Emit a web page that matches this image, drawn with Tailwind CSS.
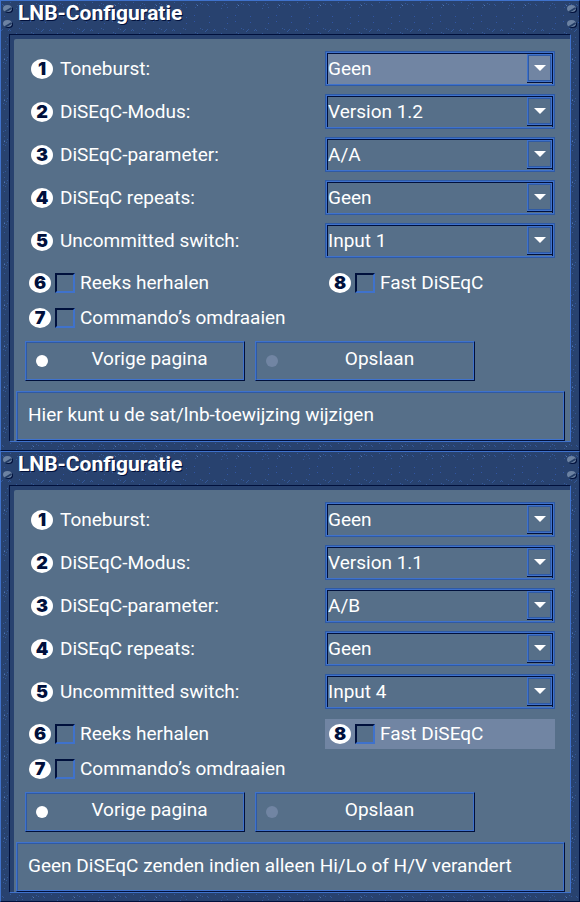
<!DOCTYPE html>
<html lang="nl">
<head>
  <meta charset="UTF-8" />
  <meta name="viewport" content="width=device-width, initial-scale=1.0" />
  <title>LNB-Configuratie</title>
  <script src="https://cdn.jsdelivr.net/npm/@tailwindcss/browser@4"></script>
</head>
<body class="bg-[#28426f] text-white font-[Roboto,sans-serif] text-[19px] leading-6">
  <!-- speckle textures shared by both windows -->
  <svg class="absolute w-0 h-0" aria-hidden="true">
    <defs>
      <pattern id="speckle-h" x="23" width="41" height="34" patternUnits="userSpaceOnUse">
        <path stroke="#33589a" d="M8 3.5h1M7 6.5h1M12 2.5h1M14 3.5h1M19 3.5h1M20 4.5h1M27 1.5h1M33 7.5h1M34 4.5h1M36 2.5h1M38 3.5h1M39 6.5h1M12 27.5h1M14 28.5h1M7 31.5h1M9 32.5h1M17 30.5h1M19 28.5h1M18 29.5h1M25 29.5h1M26 28.5h1M27 29.5h1M33 32.5h1M36 27.5h1M38 28.5h1" />
        <path stroke="#3055a4" d="M6 14.5h1M6 20.5h1M21 15.5h1M21 21.5h1M39 16.5h1M39 22.5h1" />
        <path stroke="#5378b0" d="M9 4.5h1" />
      </pattern>
      <pattern id="speckle-v" y="39" width="8" height="41" patternUnits="userSpaceOnUse">
        <path stroke="#33589a" d="M4 1.5h1M6 4.5h1M2 9.5h1M4 8.5h1M3 14.5h1M6 17.5h1M3 18.5h1M5 20.5h1M2 22.5h1M4 23.5h1M3 28.5h1M6 38.5h1" />
        <path stroke="#5378b0" d="M3 19.5h1" />
      </pattern>
      <symbol id="screw" viewBox="0 0 10 8">
        <ellipse cx="5.5" cy="4.5" rx="4.5" ry="3.5" fill="#00103c" />
        <ellipse cx="4.5" cy="3.5" rx="4.5" ry="3.5" fill="#6c82a2" />
        <path d="M2 7 8.5 3" stroke="#243d66" stroke-width="2" />
      </symbol>
    </defs>
  </svg>

  <main id="screens"></main>

  <script>
    const screens = [
      {
        values: ['Geen', 'Version 1.2', 'A/A', 'Geen', 'Input 1'],
        focus: 0,
        help: 'Hier kunt u de sat/lnb-toewijzing wijzigen',
      },
      {
        values: ['Geen', 'Version 1.1', 'A/B', 'Geen', 'Input 4'],
        focus: 'fast',
        help: 'Geen DiSEqC zenden indien alleen Hi/Lo of H/V verandert',
      },
    ];
    const labels = ['Toneburst:', 'DiSEqC-Modus:', 'DiSEqC-parameter:', 'DiSEqC repeats:', 'Uncommitted switch:'];

    function badge(n) {
      return `<span class="flex items-center justify-center shrink-0 w-[22px] h-5 rounded-[50%] bg-white text-[#00103c] font-[Inter,sans-serif] font-black text-lg leading-5">${n}</span>`;
    }

    function row(s, w, label, i) {
      const bg = s.focus === i ? 'bg-[#7185a3]' : 'bg-[#566f89]';
      return `
        <div class="grid grid-cols-[1fr_230px] items-center">
          <label for="field-${w}-${i}" class="flex items-center gap-[7px] pl-1.5">${badge(i + 1)}${label}</label>
          <div class="relative border border-[#2f5aa4]">
            <div class="border border-[#3f72cc]">
              <select id="field-${w}-${i}" class="block w-full h-[31px] appearance-none outline-none border-t border-l border-r border-[#00103c] ${bg}">
                <option>${s.values[i]}</option>
              </select>
            </div>
            <span class="absolute right-px inset-y-0.5 w-[26px] border-r border-b border-[#00103c] pointer-events-none">
              <span class="flex h-full border border-[#3f72cc]">
                <span class="flex flex-1 items-center justify-center border border-[#2f5aa4]">
                  <svg width="12" height="6" viewBox="0 0 12 6" fill="#fff"><path d="M0 0h12L6 6z" /></svg>
                </span>
              </span>
            </span>
          </div>
        </div>`;
    }

    function check(n, text, extra) {
      return `
        <label class="flex items-center h-[30px] pl-1 ${extra}">
          ${badge(n)}
          <input type="checkbox" class="appearance-none w-5 h-5 ml-1 mr-[5px] bg-[#566f89] border-2 border-t-[#00103c] border-l-[#00103c] border-r-[#3f72cc] border-b-[#3f72cc]" />
          ${text}
        </label>`;
    }

    function button(text, dot) {
      return `
        <button type="button" class="flex items-center w-[220px] h-10 border border-t-[#3f72cc] border-l-[#3f72cc] border-r-[#00103c] border-b-[#00103c]">
          <span class="flex flex-1 items-center h-full border border-t-[#2f5aa4] border-l-[#2f5aa4] border-r-[#3f72cc] border-b-[#3f72cc] pl-[9px]">
            <span class="w-3 h-3 rounded-full ${dot}"></span>
            <span class="flex-1 pl-2 pb-1">${text}</span>
          </span>
        </button>`;
    }

    function screws(side) {
      return `
        <svg class="absolute ${side} top-1 w-2.5 h-2"><use href="#screw" /></svg>
        <svg class="absolute ${side} top-[19px] w-2.5 h-2"><use href="#screw" /></svg>`;
    }

    document.getElementById('screens').innerHTML = screens.map((s, w) => `
      <section class="relative border border-t-[#3f72cc] border-l-[#3f72cc] border-r-[#00103c] border-b-[#00103c] bg-[#28426f]">
        <svg class="absolute inset-0 w-full h-full" aria-hidden="true">
          <rect width="100%" height="100%" fill="url(#speckle-v)" />
          <rect width="100%" height="33" fill="#28426f" />
          <rect width="100%" height="33" fill="url(#speckle-h)" />
          <svg y="100%" overflow="visible">
            <rect y="-8" width="100%" height="8" fill="#28426f" />
            <g transform="translate(0 -8)"><rect width="100%" height="8" fill="url(#speckle-h)" /></g>
          </svg>
        </svg>
        ${screws('left-0.5')}
        ${screws('right-0.5')}
        <h1 class="relative h-[33px] pl-[17px] font-bold text-[21px] leading-6 [text-shadow:1px_1px_0_#00103c]">LNB-Configuratie</h1>
        <form class="relative mx-2 mb-2 border border-t-[#00103c] border-l-[#00103c] border-r-[#3f72cc] border-b-[#3f72cc] bg-[#28426f] pt-1 pl-1">
          <div class="rounded-tl-[2px] bg-[#566f89] pt-3">
            <div class="flex flex-col gap-2 pl-[11px] pr-[15px]">
              ${labels.map((label, i) => row(s, w, label, i)).join('')}
            </div>
            <div class="grid grid-cols-[1fr_230px] gap-y-[5px] mt-2.5 pl-[11px] pr-[15px]">
              ${check(6, 'Reeks herhalen', '')}
              ${check(8, 'Fast DiSEqC', s.focus === 'fast' ? 'bg-[#7185a3]' : '')}
              ${check(7, 'Commando’s omdraaien', '')}
            </div>
            <div class="flex gap-2.5 mt-2 pl-[11px]">
              ${button('Vorige pagina', 'bg-white')}
              ${button('Opslaan', 'bg-[#7185a3]')}
            </div>
            <div class="mt-2.5 ml-0.5 mr-[5px] border border-t-[#3f72cc] border-l-[#3f72cc] border-r-[#00103c] border-b-[#00103c]">
              <p class="border border-t-[#2f5aa4] border-l-[#2f5aa4] border-r-[#3f72cc] border-b-[#3f72cc] px-2.5 pt-2.5 pb-3">${s.help}</p>
            </div>
          </div>
        </form>
      </section>`).join('');
  </script>
</body>
</html>
